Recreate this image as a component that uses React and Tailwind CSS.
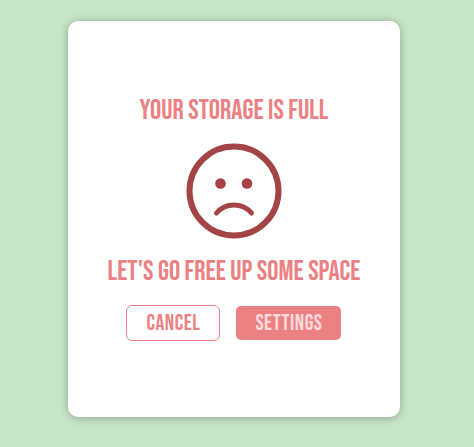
import React from 'react';

const SadFace = () => (
  <svg className="block h-24 w-24" viewBox="0 0 96 96" fill="none" aria-hidden="true">
    <circle cx="48" cy="48" r="44.5" stroke="#a34446" strokeWidth="6" />
    <circle cx="34.5" cy="40.5" r="5.3" fill="#a83f42" />
    <circle cx="61" cy="40.5" r="5.3" fill="#a83f42" />
    <path
      d="M30.5 70A23 23 0 0 1 65.5 70"
      stroke="#a34446"
      strokeWidth="5"
      strokeLinecap="round"
    />
  </svg>
);

const App = () => {
  return (
    <main className="flex min-h-screen items-center justify-center bg-[#c8e7c8] pt-5 pr-1.5 pb-[29px] font-['Bebas_Neue','Liberation_Sans_Narrow','Liberation_Sans',sans-serif] uppercase text-[#ec8183]">
      <section className="flex w-[71%] min-w-[320px] max-w-md flex-col items-center rounded-[10px] bg-white pt-[74px] pb-[76px] shadow-[0_1px_10px_rgba(0,0,0,0.3)]">
        <h1 className="text-[28px] leading-8">Your storage is full</h1>

        <div className="mt-4 mb-[17px]">
          <SadFace />
        </div>

        <p className="text-[28px] leading-8">Let's go free up some space</p>

        {/* Actions */}
        <div className="mt-[17px] flex items-center gap-4">
          <button
            type="button"
            className="h-9 w-[94px] rounded-md border border-[#ec8183] bg-white text-[22px] tracking-wide uppercase"
          >
            Cancel
          </button>
          <button
            type="button"
            className="h-[34px] w-[105px] rounded-[5px] bg-[#ec8183] text-[22px] tracking-wide uppercase text-[#ffd9dc]"
          >
            Settings
          </button>
        </div>
      </section>
    </main>
  );
};

export default App;
